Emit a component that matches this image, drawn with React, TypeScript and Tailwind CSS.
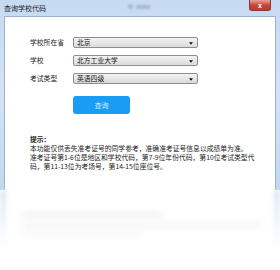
const font = "font-['Noto_Sans_CJK_SC','Noto_Sans',sans-serif]";

const Select = ({ value }: { value: string }) => (
  <div className="relative flex h-[11px] w-[125px] items-center rounded-[2px] border border-[#8e8e8e] bg-gradient-to-b from-[#f4f4f4] to-[#dadada] pl-[3px]">
    <span className="text-[6.8px] leading-none text-[#111]">{value}</span>
    <svg viewBox="0 0 6 4" className="absolute right-[4px] top-[4px] h-[3px] w-[4px]">
      <path d="M0 0 L6 0 L3 4 Z" fill="#111" />
    </svg>
  </div>
);

const rows = [
  { label: "学校所在省", value: "北京" },
  { label: "学校", value: "北方工业大学" },
  { label: "考试类型", value: "英语四级" },
];

export default function App() {
  return (
    <div className={`relative h-[270px] w-[280px] overflow-hidden bg-white ${font}`}>
      {/* window frame */}
      <div className="flex h-[190px] flex-col bg-gradient-to-b from-[#c6daf2] via-[#d3e3f6] to-[#c2d7f0]">
        {/* title bar */}
        <div className="relative flex h-[16px] items-center pl-[4px]">
          <span className="text-[7px] leading-none text-[#1a1a1a]">查询学校代码</span>
          <div className="absolute left-[128px] top-[4px] flex items-center gap-[3px] opacity-20 blur-[1px]">
            <div className="h-[5px] w-[5px] rounded-full bg-[#333]" />
            <div className="h-[4px] w-[14px] bg-[#333]" />
          </div>
          <div className="absolute left-[249px] top-0 flex h-[11px] w-[22px] items-center justify-center rounded-b-[3px] border border-t-0 border-[#8a3a33] bg-gradient-to-b from-[#e6a096] via-[#c9463a] to-[#c0392b]">
            <span className="text-[7px] font-bold leading-none text-white">x</span>
          </div>
        </div>
        {/* client area */}
        <div className="ml-[4px] mr-[4px] flex-1 border border-b-0 border-[#9bb3d1] bg-white pl-[25px] pt-[20px]">
          <div className="flex flex-col gap-[7px]">
            {rows.map((r) => (
              <div key={r.label} className="flex items-center">
                <span className="w-[43px] text-[6.8px] leading-none text-[#222]">{r.label}</span>
                <Select value={r.value} />
              </div>
            ))}
          </div>
          <button className="ml-[43px] mt-[12px] flex h-[18px] w-[57px] items-center justify-center rounded-[3px] bg-[#1a9cf5]">
            <span className="text-[7px] leading-none text-[#d6ecff]">查询</span>
          </button>
          <div className="mt-[21px] w-[230px] text-[6.8px] leading-[9px] text-[#222]">
            <p className="font-bold">提示：</p>
            <p>本功能仅供丢失准考证号的同学参考，准确准考证号信息以成绩单为准。</p>
            <p>
              准考证号第1-6位是地区和学校代码，第7-9位年份代码，第10位考试类型代
              <br />
              码，第11-13位为考场号，第14-15位座位号。
            </p>
          </div>
        </div>
      </div>
      {/* faded reflection below */}
      <div className="absolute left-0 top-[190px] h-[60px] w-[6px] bg-gradient-to-b from-[#dbe6f5] to-transparent blur-[2px]" />
      <div className="absolute right-0 top-[190px] h-[60px] w-[6px] bg-gradient-to-b from-[#dbe6f5] to-transparent blur-[2px]" />
      <div className="absolute left-[22px] top-[212px] h-[6px] w-[140px] bg-[#f3f3f3] blur-[3px]" />
      <div className="absolute left-[22px] top-[222px] h-[6px] w-[240px] bg-[#f5f5f5] blur-[3px]" />
      <div className="absolute left-[22px] top-[232px] h-[5px] w-[120px] bg-[#f7f7f7] blur-[3px]" />
    </div>
  );
}
